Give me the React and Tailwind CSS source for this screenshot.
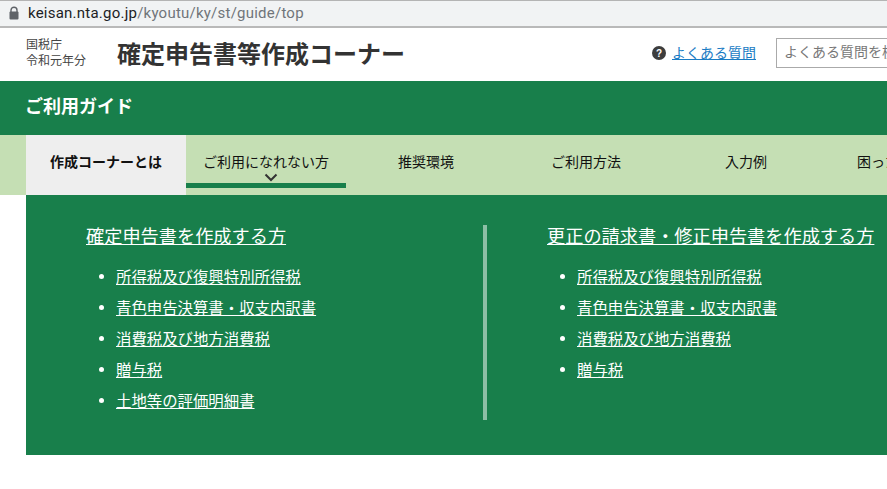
import React from "react";

const tabs = ["ご利用になれない方", "推奨環境", "ご利用方法", "入力例", "困ったときには"];
const left = ["所得税及び復興特別所得税", "青色申告決算書・収支内訳書", "消費税及び地方消費税", "贈与税", "土地等の評価明細書"];
const right = ["所得税及び復興特別所得税", "青色申告決算書・収支内訳書", "消費税及び地方消費税", "贈与税"];

function Column({ title, items, className }) {
  return (
    <div className={className}>
      <a href="#" className="block w-max text-[18.2px] leading-[24px] text-white underline underline-offset-1 -mt-[2px]">{title}</a>
      <ul className="mt-[13px] pl-[30px] flex flex-col">
        {items.map((t) => (
          <li key={t} className="h-[31px] flex items-center relative">
            <span className="absolute left-[-17px] top-[14px] w-[5px] h-[5px] rounded-full bg-white" />
            <a href="#" className="text-[15.4px] leading-[20px] text-white underline underline-offset-1 whitespace-nowrap">{t}</a>
          </li>
        ))}
      </ul>
    </div>
  );
}

export default function App() {
  return (
    <div className="w-[887px] h-[489px] overflow-hidden bg-white font-['Noto_Sans_CJK_JP','Noto_Sans',sans-serif] text-[#333]">
      <div className="h-[28px] bg-[#f1f3f4] border-t border-t-[#b4b4b4] border-b-2 border-b-[#b9b9b9] flex items-center pl-[8px]">
        <svg width="12" height="14" viewBox="0 0 12 14" className="text-[#5f6368] mb-[2px]">
          <path d="M3 6V4.2a3 3 0 0 1 6 0V6" fill="none" stroke="currentColor" strokeWidth="1.4" />
          <rect x="1.5" y="5.5" width="9" height="8" rx="1" fill="currentColor" />
        </svg>
        <div className="ml-[8px] text-[15px] leading-[20px] font-['Roboto',sans-serif] mb-[2px] tracking-[0.23px] text-[#70757a]">
          <span className="text-[#202124]">keisan.nta.go.jp</span>/kyoutu/ky/st/guide/top
        </div>
      </div>

      <header className="h-[53px] flex items-center pl-[26px] w-[1000px]">
        <div className="w-[91px] text-[12px] leading-[16px] text-[#444] mb-[5px]">
          <div>国税庁</div>
          <div>令和元年分</div>
        </div>
        <h1 className="text-[24px] leading-[32px] font-bold text-[#333] mb-[4px]">確定申告書等作成コーナー</h1>
        <div className="ml-[247px] flex items-center mb-[4px]">
          <svg width="14" height="14" viewBox="0 0 14 14">
            <circle cx="7" cy="7" r="7" fill="#3d3d3d" />
            <text x="7" y="10.5" textAnchor="middle" fontSize="10" fontWeight="700" fill="#fff" fontFamily="Liberation Sans">?</text>
          </svg>
          <a href="#" className="ml-[6px] text-[14px] leading-[20px] text-[#1a7cc4] underline underline-offset-1 mb-[2px]">よくある質問</a>
          <div className="ml-[20px] w-[200px] h-[30px] border border-[#aaa] flex items-center pl-[7px] text-[14px] text-[#777] whitespace-nowrap">
            <span className="mb-[2px]">よくある質問を検索</span>
          </div>
        </div>
      </header>

      <div className="h-[54px] bg-[#187f4b] flex items-center pl-[26px]">
        <h2 className="text-[18px] leading-[24px] font-bold text-white mb-[7px] -ml-[1px]">ご利用ガイド</h2>
      </div>

      <nav className="h-[60px] bg-[#c5dfb4] flex pl-[26px] w-[1100px] text-[14px] text-[#111]">
        <div className="w-[160px] bg-[#eeeeee] flex items-center justify-center font-bold"><span className="mb-[8px]">作成コーナーとは</span></div>
        {tabs.map((t, i) => (
          <div key={t} className="w-[160px] relative flex items-center justify-center">
            <span className="whitespace-nowrap mb-[8px]">{t}</span>
            {i === 0 && (
              <>
                <svg width="14" height="9" viewBox="0 0 14 9" className="absolute left-[78px] top-[38px]">
                  <path d="M1.5 1.5 7 7l5.5-5.5" fill="none" stroke="#333" strokeWidth="2" />
                </svg>
                <span className="absolute left-0 right-0 top-[48px] h-[5px] bg-[#187f4b]" />
              </>
            )}
          </div>
        ))}
      </nav>

      <section className="ml-[26px] h-[260px] bg-[#187f4b] flex w-[1000px] pt-[30px]">
        <Column title="確定申告書を作成する方" items={left} className="w-[457px] pl-[60px]" />
        <div className="w-[4px] h-[195px] bg-[#8cbfa5]" />
        <Column title="更正の請求書・修正申告書を作成する方" items={right} className="pl-[60px]" />
      </section>
    </div>
  );
}
